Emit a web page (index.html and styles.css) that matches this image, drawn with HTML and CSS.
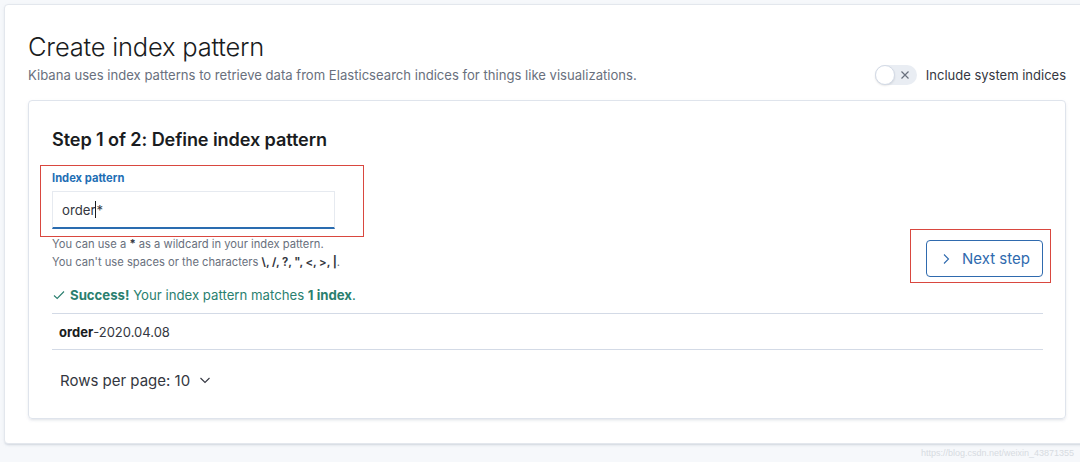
FILE: index.html
```html
<!DOCTYPE html>
<html>
<head>
<meta charset="utf-8">
<link rel="stylesheet" href="styles.css">
</head>
<body>
<div class="outer">
  <div class="header">
    <div class="header-text">
      <h1 class="title">Create index pattern</h1>
      <p class="subtitle">Kibana uses index patterns to retrieve data from Elasticsearch indices for things like visualizations.</p>
    </div>
    <div class="toggle">
      <span class="switch">
        <span class="knob"></span>
        <svg class="switch-x" width="10" height="10" viewBox="0 0 10 10"><path d="M1.5 1.5 L8.5 8.5 M8.5 1.5 L1.5 8.5" stroke="#69707d" stroke-width="1.2" fill="none"/></svg>
      </span>
      <span class="toggle-label">Include system indices</span>
    </div>
  </div>
  <div class="inner">
    <h2 class="step">Step 1 of 2: Define index pattern</h2>
    <div class="form-row">
      <div class="form">
        <label class="label">Index pattern</label>
        <div class="input"><span>order</span><span class="caret"></span><span>*</span></div>
        <div class="help">You can use a <b>*</b> as a wildcard in your index pattern.<br>You can't use spaces or the characters <b>\, /, ?, ", &lt;, &gt;, |</b>.</div>
      </div>
      <button class="next">
        <svg width="16" height="16" viewBox="0 0 16 16"><path d="M6 3.5 L10.5 8 L6 12.5" stroke="#2f6aae" stroke-width="1.1" fill="none"/></svg>
        <span>Next step</span>
      </button>
    </div>
    <div class="success">
      <svg width="14" height="14" viewBox="0 0 14 14"><path d="M2 7.5 L5.2 10.5 L12 3.5" stroke="#2a7f6f" stroke-width="1.1" fill="none"/></svg>
      <span><b>Success!</b> Your index pattern matches <b>1 index</b>.</span>
    </div>
    <div class="table">
      <div class="row"><b>order</b>-2020.04.08</div>
    </div>
    <div class="pager">
      <span>Rows per page: 10</span>
      <svg width="14" height="14" viewBox="0 0 14 14"><path d="M2.5 5 L7 9.5 L11.5 5" stroke="#343741" stroke-width="1.1" fill="none"/></svg>
    </div>
    <div class="mark mark-form"></div>
    <div class="mark mark-btn"></div>
  </div>
</div>
<div class="watermark">https://blog.csdn.net/weixin_43871355</div>
</body>
</html>
```

FILE: styles.css
```css
html, body {
  margin: 0;
  padding: 0;
}
body {
  background: #f6f8fb;
  font-family: Inter, "Noto Sans", "Liberation Sans", sans-serif;
  color: #343741;
  width: 1080px;
  height: 462px;
  overflow: hidden;
  position: relative;
}
.outer {
  margin: 4px -11px 0 4px;
  background: #fff;
  border: 1px solid #e3e7ed;
  border-radius: 4px;
  box-shadow: 0 2px 2px -1px rgba(152,162,179,0.3), 0 1px 4px -1px rgba(152,162,179,0.2);
  padding: 24px 24px 24px 23px;
}
.header {
  display: flex;
  justify-content: space-between;
  align-items: flex-end;
}
.title {
  margin: 0;
  font-size: 25.5px;
  line-height: 36px;
  font-weight: 300;
  color: #1a1c21;
  letter-spacing: -0.2px;
}
.subtitle {
  margin: 0;
  font-size: 13.1px;
  line-height: 20px;
  color: #69707d;
}
.toggle {
  display: flex;
  align-items: center;
  gap: 9px;
  height: 20px;
}
.switch {
  position: relative;
  width: 42px;
  height: 20px;
  border-radius: 10px;
  background: #e9edf3;
  display: inline-block;
}
.knob {
  position: absolute;
  left: 0;
  top: 0;
  width: 18px;
  height: 18px;
  border-radius: 50%;
  background: #fff;
  border: 1px solid #d3dae6;
  box-shadow: 0 1px 2px rgba(0,0,0,0.1);
}
.switch-x {
  position: absolute;
  left: 25px;
  top: 5px;
}
.toggle-label {
  font-size: 13px;
  line-height: 20px;
  color: #343741;
}
.inner {
  position: relative;
  margin-top: 15px;
  border: 1px solid #dfe4ec;
  border-radius: 4px;
  box-shadow: 0 2px 3px -1px rgba(152,162,179,0.25), 0 1px 4px -1px rgba(152,162,179,0.15);
  padding: 24px 23px 22px 23px;
}
.step {
  margin: 0;
  font-size: 18.1px;
  line-height: 28px;
  font-weight: 600;
  color: #1a1c21;
  letter-spacing: -0.1px;
}
.form-row {
  display: flex;
  justify-content: space-between;
  align-items: flex-end;
  margin-top: 16px;
}
.form {
  display: flex;
  flex-direction: column;
  padding-bottom: 6px;
}
.label {
  font-size: 11.2px;
  line-height: 18px;
  font-weight: 700;
  color: #1f6fb5;
}
.input {
  margin-top: 4px;
  width: 283px;
  height: 38px;
  box-sizing: border-box;
  background: #fff;
  border: 1px solid #e6eaf0;
  border-bottom: 2px solid #2a6cb0;
  padding: 0 9px;
  display: flex;
  align-items: center;
  font-size: 13.2px;
  color: #343741;
}
.caret {
  display: inline-block;
  width: 1px;
  height: 17px;
  background: #1a1c21;
}
.help {
  margin-top: 6px;
  font-size: 11.2px;
  line-height: 18px;
  color: #69707d;
}
.help b {
  color: #343741;
}
.next {
  display: flex;
  align-items: center;
  gap: 8px;
  width: 117px;
  height: 37px;
  box-sizing: border-box;
  border: 1px solid #2f6aae;
  border-radius: 4px;
  background: #fff;
  color: #2f6aae;
  font-family: inherit;
  font-size: 15px;
  padding: 0 0 0 11px;
  margin-right: -1px;
}
.success {
  display: flex;
  align-items: center;
  gap: 4px;
  margin-top: 8px;
  font-size: 13.2px;
  line-height: 20px;
  color: #2a7f6f;
}
.success b {
  font-weight: 700;
}
.table {
  margin-top: 8px;
  margin-right: -1px;
  border-top: 1px solid #d3dae6;
}
.row {
  height: 35px;
  border-bottom: 1px solid #d3dae6;
  display: flex;
  align-items: center;
  padding-left: 7px;
  font-size: 13px;
  color: #343741;
}
.row b {
  font-weight: 700;
  color: #1a1c21;
}
.pager {
  margin-top: 14px;
  height: 32px;
  display: flex;
  align-items: center;
  gap: 8px;
  padding-left: 8px;
  font-size: 15px;
  color: #343741;
}
.mark {
  position: absolute;
  border: 1px solid #d9473f;
  box-sizing: border-box;
}
.mark-form {
  left: 11px;
  top: 64px;
  width: 324px;
  height: 72px;
}
.mark-btn {
  left: 881px;
  top: 128px;
  width: 141px;
  height: 54px;
}
.watermark {
  position: absolute;
  right: 6px;
  bottom: 4px;
  font-size: 9px;
  color: #d7dbe1;
  font-family: "Liberation Sans", sans-serif;
}
```
